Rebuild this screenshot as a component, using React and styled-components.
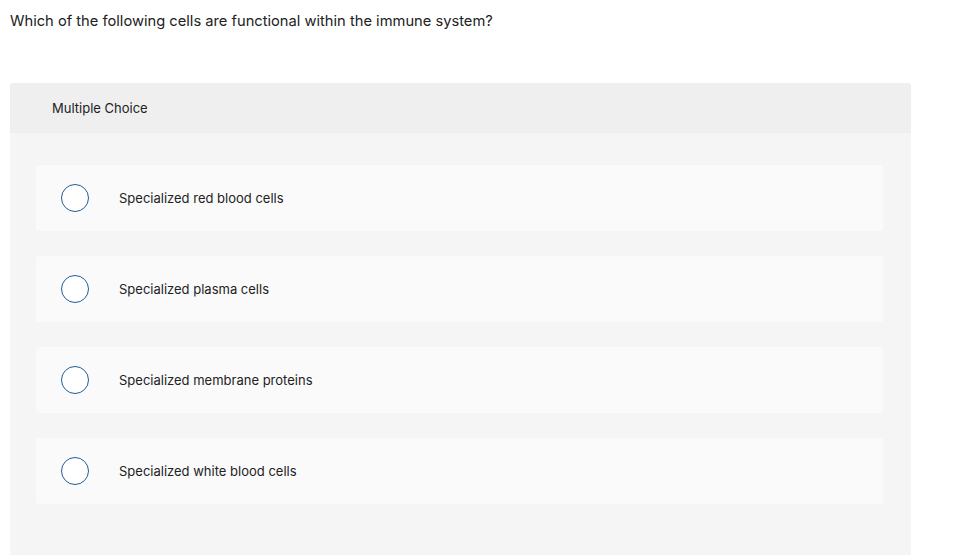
import React from 'react'
import styled, { createGlobalStyle } from 'styled-components'

const Global = createGlobalStyle`
  html, body {
    margin: 0;
    padding: 0;
    background: #fff;
    font-family: 'Inter', 'Lato', sans-serif;
  }
`

const Page = styled.div`
  padding: 0 47px 0 10px;
  height: 555px;
  overflow: hidden;
`

const Question = styled.p`
  margin: 0;
  padding-top: 11px;
  height: 83px;
  box-sizing: border-box;
  font-size: 14.7px;
  line-height: 20px;
  color: #222;
`

const Panel = styled.section`
  background: #f5f5f5;
  border-radius: 3px 3px 0 0;
  min-height: 472px;
`

const PanelHeader = styled.header`
  height: 50px;
  display: flex;
  align-items: center;
  padding-left: 42px;
  background: #efefef;
  border-radius: 3px 3px 0 0;
  font-size: 13px;
  color: #222;
`

const Options = styled.div`
  display: flex;
  flex-direction: column;
  gap: 25px;
  padding: 32px 28px 32px 26px;
`

const Option = styled.label`
  display: flex;
  align-items: center;
  height: 66px;
  padding-left: 25px;
  background: #fafafa;
  border-radius: 3px;
  font-size: 13px;
  color: #222;
  cursor: pointer;
`

const Radio = styled.span`
  flex: none;
  box-sizing: border-box;
  width: 28px;
  height: 28px;
  margin-right: 30px;
  border: 1.5px solid #1f5c99;
  border-radius: 50%;
  background: #fff;
`

const choices = [
  'Specialized red blood cells',
  'Specialized plasma cells',
  'Specialized membrane proteins',
  'Specialized white blood cells',
]

export default function App() {
  return (
    <>
      <Global />
      <Page>
        <Question>Which of the following cells are functional within the immune system?</Question>
        <Panel>
          <PanelHeader>Multiple Choice</PanelHeader>
          <Options>
            {choices.map((c) => (
              <Option key={c}>
                <Radio />
                {c}
              </Option>
            ))}
          </Options>
        </Panel>
      </Page>
    </>
  )
}
